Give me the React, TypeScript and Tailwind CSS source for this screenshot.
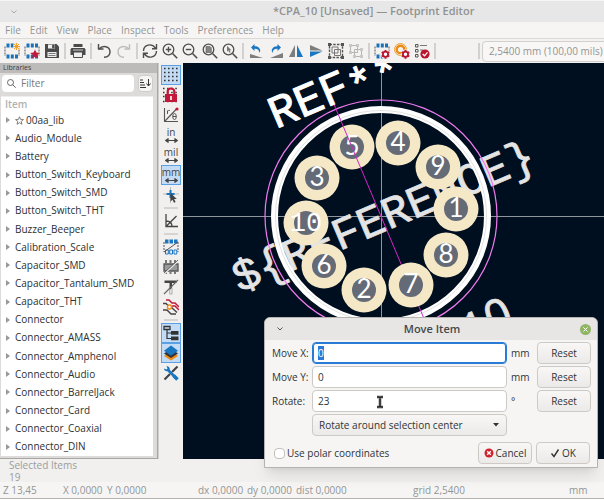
import { useEffect, useRef } from "react";
import type { ReactNode } from "react";
import clsx from "clsx";

const menus = ["File", "Edit", "View", "Place", "Inspect", "Tools", "Preferences", "Help"];

const libraries = [
  "00aa_lib",
  "Audio_Module",
  "Battery",
  "Button_Switch_Keyboard",
  "Button_Switch_SMD",
  "Button_Switch_THT",
  "Buzzer_Beeper",
  "Calibration_Scale",
  "Capacitor_SMD",
  "Capacitor_Tantalum_SMD",
  "Capacitor_THT",
  "Connector",
  "Connector_AMASS",
  "Connector_Amphenol",
  "Connector_Audio",
  "Connector_BarrelJack",
  "Connector_Card",
  "Connector_Coaxial",
  "Connector_DIN",
];

const pads = [
  { n: "3", x: 317, y: 178 },
  { n: "4", x: 398, y: 143 },
  { n: "9", x: 438, y: 167 },
  { n: "1", x: 456, y: 209 },
  { n: "10", x: 306, y: 223 },
  { n: "6", x: 324, y: 266 },
  { n: "2", x: 364, y: 290 },
  { n: "8", x: 446, y: 255 },
  { n: "7", x: 411, y: 285 },
];

function Icon({ children }: { children: ReactNode }) {
  return (
    <svg viewBox="0 0 16 16" className="h-4 w-4" fill="none" aria-hidden="true">
      {children}
    </svg>
  );
}

function Gear({ x, y }: { x: number; y: number }) {
  return (
    <g transform={`translate(${x} ${y})`}>
      <circle r="2.6" stroke="#b9152f" strokeWidth="1.8" fill="#fff" />
      <path
        d="M0-4.4V-3M0 3v1.4M-3.8-2.2l1.2.7M2.6 1.5l1.2.7M-3.8 2.2l1.2-.7M2.6-1.5l1.2-.7"
        stroke="#b9152f"
        strokeWidth="1.9"
      />
    </g>
  );
}

function FootprintBody() {
  return (
    <>
      <path d="M1 3.5V13M15 3.5V13" stroke="#555" strokeWidth="1" strokeDasharray="2 1" />
      <path d="M2.5.5h3v4h-3zM6.8.5h3v4h-3zM11 .5h3v4h-3zM2.5 11.5h3v4h-3zM6.8 11.5h3v4h-3zM11 11.5h3v4h-3z" fill="#1a72b8" />
    </>
  );
}

function Magnifier({ children }: { children?: ReactNode }) {
  return (
    <Icon>
      <circle cx="6.5" cy="6.5" r="5.3" stroke="#4d4d4d" strokeWidth="1.3" />
      <path d="M10.5 10.5l4.7 4.7" stroke="#4d4d4d" strokeWidth="1.6" />
      {children}
    </Icon>
  );
}

const topGroups: { label: string; icon: ReactNode }[][] = [
  [
    {
      label: "New footprint",
      icon: (
        <Icon>
          <FootprintBody />
          <circle cx="12.5" cy="3.5" r="3.4" fill="#f0efee" />
          <path d="M12.5 0v7M9 3.5h7M10 1l5 5M15 1l-5 5" stroke="#f5a02c" strokeWidth="1" />
        </Icon>
      ),
    },
    {
      label: "New footprint using wizard",
      icon: (
        <Icon>
          <FootprintBody />
          <path d="M11 6.5l1.4 3.1 3.4.3-2.6 2.2.8 3.4-3-1.8-3 1.8.8-3.4-2.6-2.2 3.4-.3z" fill="#c2183a" />
        </Icon>
      ),
    },
    {
      label: "Save",
      icon: (
        <Icon>
          <path d="M1 1h11.5L15 3.5V15H1z" fill="#4a4a4a" />
          <path d="M4 1.5h7v4H4zM3.5 9h9v5h-9z" fill="#eee" />
          <path d="M8.5 2h1.7v3H8.5zM4.5 10.5h7M4.5 12.5h7" fill="#4a4a4a" stroke="#4a4a4a" strokeWidth=".7" />
        </Icon>
      ),
    },
  ],
  [
    {
      label: "Print",
      icon: (
        <Icon>
          <path d="M3.5 1h9v3h-9z" fill="#4a4a4a" />
          <path d="M1.5 5h13L15.5 6.5V12h-15V6.5z" fill="#4a4a4a" />
          <path d="M3.5 9h9v5.5h-9z" fill="#eee" stroke="#4a4a4a" />
          <path d="M3 7h10" stroke="#ccc" />
        </Icon>
      ),
    },
  ],
  [
    {
      label: "Undo",
      icon: (
        <Icon>
          <path d="M2.5 1v5h5M3 6C6.5 2 14 3 14 9c0 3-2.5 5-6 5.3" stroke="#4d4d4d" strokeWidth="1.4" />
        </Icon>
      ),
    },
    {
      label: "Redo",
      icon: (
        <Icon>
          <path d="M13.5 1v5h-5M13 6C9.5 2 2 3 2 9c0 3 2.5 5 6 5.3" stroke="#bdbdbd" strokeWidth="1.4" />
        </Icon>
      ),
    },
  ],
  [
    {
      label: "Refresh",
      icon: (
        <Icon>
          <path d="M1.5 8C1.7 1.5 9.5-.2 13.5 5M14.5 1v4.7H10M14.5 8c-.2 6.5-8 8.2-12 3M1.5 15v-4.7H6" stroke="#4d4d4d" strokeWidth="1.4" />
        </Icon>
      ),
    },
    {
      label: "Zoom in",
      icon: (
        <Magnifier>
          <path d="M6.5 3.8v5.4M3.8 6.5h5.4" stroke="#4d4d4d" strokeWidth="1.4" />
        </Magnifier>
      ),
    },
    {
      label: "Zoom out",
      icon: (
        <Magnifier>
          <path d="M3.8 6.5h5.4" stroke="#4d4d4d" strokeWidth="1.4" />
        </Magnifier>
      ),
    },
    {
      label: "Zoom to fit",
      icon: (
        <Magnifier>
          <path d="M4 3.5h4l1.3 1.3v4.7H4z" fill="#858585" stroke="#555" strokeWidth=".6" />
        </Magnifier>
      ),
    },
    {
      label: "Zoom to selection",
      icon: (
        <Magnifier>
          <path d="M5 2.8v6l1.4-1.2 1 2.2 1.2-.6-1-2h1.8z" fill="#777" />
        </Magnifier>
      ),
    },
  ],
  [
    {
      label: "Rotate counterclockwise",
      icon: (
        <Icon>
          <path d="M2 11l13 4H2z" fill="#7d7d7d" />
          <path d="M6.5 1L3 4.5 6.5 8V5.7c3-.2 4.8 1.3 5 4.3 2-3.5-.5-7-5-6.8z" fill="#1a76c0" />
        </Icon>
      ),
    },
    {
      label: "Rotate clockwise",
      icon: (
        <Icon>
          <path d="M15 10v5H2z" fill="#7d7d7d" />
          <path d="M9.5 1L13 4.5 9.5 8V5.7c-3-.2-4.8 1.3-5 4.3-2-3.5.5-7 5-6.8z" fill="#1a76c0" />
        </Icon>
      ),
    },
    {
      label: "Mirror horizontally",
      icon: (
        <Icon>
          <path d="M7 2v12H1z" fill="#7d7d7d" />
          <path d="M9 2v12h6z" fill="#1a76c0" />
        </Icon>
      ),
    },
    {
      label: "Mirror vertically",
      icon: (
        <Icon>
          <path d="M2 2l12.5 5.5H2z" fill="#7d7d7d" />
          <path d="M2 14l12.5-5.5H2z" fill="#1a76c0" />
        </Icon>
      ),
    },
    {
      label: "Group",
      icon: (
        <Icon>
          <path d="M1.5 1.5h13v13h-13z" stroke="#555" strokeWidth="1.4" strokeDasharray="2.5 1.2" />
          <path d="M4 4h6v6H4zM6.5 6.5h6v6h-6z" stroke="#777" />
          <path d="M0 0h3v3H0zM13 0h3v3h-3zM0 13h3v3H0zM13 13h3v3h-3z" fill="#555" />
        </Icon>
      ),
    },
    {
      label: "Ungroup",
      icon: (
        <Icon>
          <path d="M2.5 2.5h7v7h-7zM6.5 6.5h7v7h-7z" stroke="#b5b5b5" />
          <path d="M1 1h3v3H1zM8 1h3v3H8zM1 8h3v3H1zM12 5h3v3h-3zM12 12h3v3h-3zM5 12h3v3H5z" fill="#c8c8c8" />
        </Icon>
      ),
    },
  ],
  [
    {
      label: "Footprint properties",
      icon: (
        <Icon>
          <FootprintBody />
          <circle cx="11.5" cy="11.3" r="5" fill="#f0efee" />
          <Gear x={11.5} y={11.3} />
        </Icon>
      ),
    },
    {
      label: "Pad properties",
      icon: (
        <Icon>
          <circle cx="6.5" cy="6.5" r="6" stroke="#f0a030" />
          <circle cx="6.5" cy="6.5" r="3.8" stroke="#ee8a12" strokeWidth="2.4" />
          <circle cx="11.5" cy="11.3" r="4.8" fill="#f0efee" />
          <Gear x={11.5} y={11.3} />
        </Icon>
      ),
    },
    {
      label: "Check footprint",
      icon: (
        <Icon>
          <path d="M1.5 1.5h2.5V4H1.5zM1.5 6.5h2.5V9H1.5zM1.5 11.5h2.5V14H1.5z" stroke="#555" />
          <path d="M6 2.5h7M6 7h3" stroke="#777" />
          <circle cx="11" cy="11" r="4.6" fill="#b9152f" />
          <path d="M8.7 11l1.8 1.8 3-3.5" stroke="#fff" strokeWidth="1.3" />
        </Icon>
      ),
    },
  ],
];

function UnitIcon({ unit }: { unit: string }) {
  return (
    <span className="flex flex-col items-center text-[10px] leading-[11px] text-[#444]">
      {unit}
      <svg viewBox="0 0 13 5" className="h-[5px] w-[13px]" aria-hidden="true">
        <path d="M2 2.5h9M3.5.5L.8 2.5l2.7 2M9.5.5l2.7 2-2.7 2" fill="#444" stroke="#444" strokeWidth="1.2" />
      </svg>
    </span>
  );
}

const sideGroups: { label: string; on?: boolean; icon: ReactNode }[][] = [
  [
    {
      label: "Show grid",
      on: true,
      icon: (
        <Icon>
          <path
            d="M1 1.5h15M1 5.5h15M1 9.5h15M1 13.5h15"
            stroke="#333"
            strokeWidth="1.6"
            strokeDasharray="1.6 2.4"
          />
        </Icon>
      ),
    },
    {
      label: "Grid overrides",
      icon: (
        <Icon>
          <path d="M0 1.5h16M0 5.5h16M0 9.5h16M0 14.5h16" stroke="#333" strokeWidth="1.5" strokeDasharray="1.5 2.6" />
          <path d="M4.7 8V4.5c0-4 6.6-4 6.6 0V8" stroke="#c2183a" strokeWidth="2.2" />
          <path d="M2 7h12v8H2z" fill="#c2183a" />
          <path d="M8 9v4" stroke="#fff" strokeWidth="1.6" />
        </Icon>
      ),
    },
    {
      label: "Polar coordinates",
      icon: (
        <Icon>
          <path d="M1.5 1v13.5H15M2 14L13.5 2" stroke="#555" strokeWidth="1.1" />
          <path d="M4.5 7V3.5M4.5 4.5C5 3.5 6 3.3 7 3.5" stroke="#555" />
          <ellipse cx="11.5" cy="9.5" rx="1.8" ry="3" stroke="#555" />
          <path d="M9.7 9.5h3.6" stroke="#555" />
          <circle cx="14" cy="2" r="1.6" fill="#c2183a" />
        </Icon>
      ),
    },
    { label: "Inches", icon: <UnitIcon unit="in" /> },
    { label: "Mils", icon: <UnitIcon unit="mil" /> },
    { label: "Millimeters", on: true, icon: <UnitIcon unit="mm" /> },
    {
      label: "Full-window crosshairs",
      icon: (
        <Icon>
          <path d="M7.5 0v16M0 7h16" stroke="#bbb" />
          <path d="M7.5 3v8M3.5 7h8" stroke="#1a76c0" strokeWidth="2" />
          <path d="M7.5 6v8.5l2-1.8 1.5 3 1.6-.8-1.5-3h2.7z" fill="#444" />
        </Icon>
      ),
    },
  ],
  [
    {
      label: "Constrain angles",
      icon: (
        <Icon>
          <path d="M3 1v12.5h12M3 13.5L13.5 3M3 8c4 0 6 2.5 6 5.5" stroke="#444" strokeWidth="1.3" />
        </Icon>
      ),
    },
  ],
  [
    {
      label: "Sketch pads",
      icon: (
        <Icon>
          <path d="M1 3v10M15 3v10" stroke="#555" strokeDasharray="2 1" />
          <path d="M2 .5h3.5v4H2zM6.5.5H10v4H6.5zM11 .5h3.5v4H11z" fill="#1a76c0" />
          <path d="M2.5 11h2.8v4H2.5zM6.7 11h2.8v4H6.7zM11 11h2.8v4H11z" stroke="#1a76c0" />
          <path d="M1 13L15 3" stroke="#555" />
        </Icon>
      ),
    },
    {
      label: "Sketch graphics",
      icon: (
        <Icon>
          <path d="M1 5h14v7H1z" fill="#999" stroke="#555" strokeWidth="1.3" />
          <path d="M3 1v4M7.5 1v4M12 1v4M3 12v3M7.5 12v3M12 12v3" stroke="#777" strokeWidth="2" />
          <path d="M1 15L15 2" stroke="#eee" strokeWidth="1.6" />
          <path d="M1 14L15 1" stroke="#444" strokeWidth=".8" />
        </Icon>
      ),
    },
    {
      label: "Sketch text",
      icon: (
        <Icon>
          <path d="M1.5 1.5h12v2.5h-4.5v5l-2.5 2V4h-5z" fill="#444" />
          <path d="M6.7 10.5V15H9V8.5" stroke="#aaa" />
          <path d="M1 15L15 1" stroke="#666" strokeWidth="1.1" />
        </Icon>
      ),
    },
    {
      label: "Sketch tracks",
      icon: (
        <Icon>
          <path d="M0 4.5h3l3 3M0 11h4l4 4h5M8 8l6 5.5" stroke="#444" strokeWidth="1.4" />
          <path d="M3 1h3l3 3h3l4 4M9 7h3l4 4" stroke="#c2183a" strokeWidth="1.5" />
          <circle cx="6.5" cy="8" r="2" fill="#fff" stroke="#ee8a12" strokeWidth="1.5" />
        </Icon>
      ),
    },
  ],
  [
    {
      label: "Footprint tree",
      on: true,
      icon: (
        <Icon>
          <path d="M1 1.5h6v3H1z" stroke="#333" strokeWidth="1.3" />
          <path d="M4 4.5v9h4M4 8h4" stroke="#333" strokeWidth="1.2" />
          <path d="M8 6h7.5v3.7H8zM8 11.5h7.5v3.7H8z" fill="#333" />
        </Icon>
      ),
    },
    {
      label: "Layers manager",
      on: true,
      icon: (
        <Icon>
          <path d="M8 6l7 5-7 4.5L1 11z" fill="#ee8a12" />
          <path d="M8 3.5l7 5L8 13 1 8.5z" fill="#333" />
          <path d="M8 .5l7 5.3-7 5-7-5z" fill="#1a76c0" />
        </Icon>
      ),
    },
    {
      label: "Tools",
      icon: (
        <Icon>
          <path d="M14.5 1.5L9 7M7 9l-5.5 5.5" stroke="#444" strokeWidth="2.2" />
          <path d="M4.5 4.5L14 14" stroke="#1a76c0" strokeWidth="2.6" />
          <path d="M1 3.5C1 6 4 7 6 5.5S6 1 3.5 1l1 2.5L3.5 4.5z" fill="#1a76c0" />
          <path d="M10.5 10.5l4 4" stroke="#1a76c0" strokeWidth="3.5" />
        </Icon>
      ),
    },
  ],
];

function TopToolbar() {
  return (
    <div className="flex h-[25px] items-center overflow-hidden border-t border-[#dcdad8] bg-[#f3f2f1] pl-[2px]">
      {topGroups.map((group, i) => (
        <div key={i} className="flex shrink-0 items-center">
          {group.map((item) => (
            <button key={item.label} aria-label={item.label} className="flex h-5 w-5 items-center justify-center">
              {item.icon}
            </button>
          ))}
          <span className="mx-[2px] h-4 w-[2px] bg-[#d3d1cf]" />
        </div>
      ))}
      <span className="ml-[40px] h-4 w-[2px] shrink-0 bg-[#d3d1cf]" />
      <select
        aria-label="Grid"
        className="ml-[2px] h-[21px] w-[160px] shrink-0 appearance-none rounded border border-[#d2cfcc] bg-[#f8f7f6] px-[6px] text-[10px] text-[#929595]"
      >
        <option>2,5400 mm (100,00 mils)</option>
      </select>
    </div>
  );
}

function SideToolbar() {
  return (
    <div className="flex w-[25px] shrink-0 flex-col items-end border-l border-[#d0cecc] bg-[#f1f0ef] pt-[2px] pr-[2px]">
      {sideGroups.map((group, i) => (
        <div key={i} className="flex w-5 flex-col items-center">
          {i > 0 && <span className="my-[2px] h-[2px] w-[14px] bg-[#d6d4d2]" />}
          {group.map((item) => (
            <button
              key={item.label}
              aria-label={item.label}
              className={clsx(
                "flex h-5 w-5 items-center justify-center",
                item.on && "border border-[#5b9fe4] bg-[#c3dbf4]"
              )}
            >
              {item.icon}
            </button>
          ))}
        </div>
      ))}
    </div>
  );
}

function LibraryPanel() {
  return (
    <aside className="flex w-[158px] shrink-0 flex-col border-r border-b border-[#a9a7a5] bg-[#dddbd9]">
      <h2 className="h-[10px] bg-[#bdbbb9] pl-[3px] text-[7px] leading-[10px] text-[#3c3c3c]">Libraries</h2>
      <div className="flex gap-1 px-[2px] pt-[2px] pr-[4px]">
        <label className="flex h-[17px] min-w-0 flex-1 items-center gap-[5px] rounded-sm bg-white pl-[5px]">
          <svg viewBox="0 0 9 9" className="h-[9px] w-[9px] shrink-0" fill="none" stroke="#666" aria-hidden="true">
            <circle cx="3.5" cy="3.5" r="3" />
            <path d="M5.7 5.7l3 3" />
          </svg>
          <input placeholder="Filter" aria-label="Filter" className="w-full min-w-0 text-[10px] outline-none placeholder:text-[#777]" />
        </label>
        <button aria-label="Sort" className="flex h-[17px] w-[15px] items-center justify-center rounded-sm border border-[#cfccc9] bg-[#f6f5f4]">
          <svg viewBox="0 0 11 11" className="h-[11px] w-[11px]" fill="none" stroke="#333" aria-hidden="true">
            <path d="M0 2h3M0 4.5h4M0 7h5M0 9.5h6" strokeWidth="1.2" />
            <path d="M8.5 1v6.5M6.5 5.5l2 2.5 2-2.5" />
          </svg>
        </button>
      </div>
      <div className="mx-[1px] mt-[4px] mr-[4px] mb-[2px] flex flex-1 flex-col border-t border-[#eee] bg-white">
        <div className="h-[14px] pl-[4px] text-[10px] leading-[14px] font-semibold text-[#b0b2b2]">Item</div>
        <ul className="flex flex-1 flex-col text-[10px] text-[#2b3033]">
          {libraries.map((name, i) => (
            <li key={name} className="flex flex-1 items-center pl-[5px]">
              <svg viewBox="0 0 4 6" className="mr-[5px] h-[6px] w-[4px]" aria-hidden="true">
                <path d="M0 0l4 3-4 3z" fill="#999" />
              </svg>
              {i === 0 && (
                <svg viewBox="0 0 10 10" className="mr-[2px] h-[9px] w-[9px]" fill="none" stroke="#666" aria-hidden="true">
                  <path d="M5 .8l1.2 3 3.2.2-2.5 2 .9 3.2L5 7.4 2.2 9.2l.9-3.2-2.5-2 3.2-.2z" strokeWidth=".9" />
                </svg>
              )}
              {name}
            </li>
          ))}
        </ul>
      </div>
    </aside>
  );
}

function Pad({ n, x, y }: { n: string; x: number; y: number }) {
  const wide = n.length > 1;

  return (
    <g>
      <circle cx={x} cy={y} r="22.5" fill="#f5e8c6" />
      <circle cx={x} cy={y} r="12" fill="#646b77" />
      <text
        x={x}
        y={y + 8}
        textAnchor="middle"
        fontSize={wide ? 27 : 26}
        fontFamily={wide ? "Liberation Mono, monospace" : "Lato, sans-serif"}
        fill="#fff"
      >
        {n}
      </text>
    </g>
  );
}

function Board() {
  return (
    <main className="min-w-0 flex-1 overflow-hidden bg-[#000f20]">
      <svg viewBox="183 63 421 396" className="h-[396px] w-[421px]" fontFamily="Liberation Mono, monospace">
        <path d="M381.5 63v396M183 216.5h421" stroke="#8f959d" />
        <g fontSize="45" fill="#e4e4e4" stroke="#e4e4e4" strokeWidth=".8" strokeLinejoin="round">
          <text transform="translate(383 216) rotate(-23)" y="15" textAnchor="middle">
            {"${REFERENCE}"}
          </text>
          <text transform="translate(516 325) rotate(-23)" textAnchor="end">
            CPA_1<tspan fontFamily="Noto Sans, sans-serif">0</tspan>
          </text>
        </g>
        <circle cx="381" cy="216" r="106.5" fill="none" stroke="#fff" strokeWidth="7" />
        <circle cx="381" cy="216" r="105.5" fill="none" stroke="#e2e2e2" />
        <circle cx="381" cy="216" r="116" fill="none" stroke="#f07af0" strokeWidth="1.2" />
        <Pad n="5" x={352} y={147} />
        <path d="M333 102l92 219" stroke="#d326c8" />
        {pads.map((pad) => (
          <Pad key={pad.n} {...pad} />
        ))}
        <text transform="translate(276 129) rotate(-23)" fontSize="46" fill="#fff" stroke="#fff" strokeWidth="1" strokeLinejoin="round">
          REF<tspan dy="7">**</tspan>
        </text>
      </svg>
    </main>
  );
}

const buttonStyle =
  "flex h-[22px] w-[54px] items-center justify-center gap-[2px] rounded border border-[#cdc9c5] bg-linear-to-b from-[#f8f7f6] to-[#eceae8]";

function Field({ id, label, value, unit, active }: { id: string; label: string; value: string; unit: string; active?: boolean }) {
  const ref = useRef<HTMLInputElement>(null);

  useEffect(() => {
    if (active) ref.current?.select();
  }, [active]);

  return (
    <div className="flex h-[22px] items-center">
      <label htmlFor={id} className="w-10 shrink-0 whitespace-nowrap">
        {label}
      </label>
      <input
        id={id}
        ref={ref}
        defaultValue={value}
        className="h-[22px] min-w-0 flex-1 rounded border border-[#cdc9c5] bg-white px-[5px] outline-none selection:bg-[#2a7bd6] selection:text-white focus:border-[#2a7bd6] focus:ring-1 focus:ring-[#2a7bd6] focus:ring-inset"
      />
      <span className="w-[30px] shrink-0 pl-[4px]">{unit}</span>
      <button className={buttonStyle}>Reset</button>
    </div>
  );
}

function MoveDialog() {
  return (
    <section
      role="dialog"
      aria-label="Move Item"
      className="absolute top-[317px] right-[6px] w-[334px] overflow-hidden rounded-t-md border border-[#b5b3b1] bg-[#f6f5f4] text-[10px] text-[#2e3436] shadow-lg"
    >
      <header className="flex h-[22px] items-center justify-between bg-[#e7e6e5] px-[6px]">
        <svg viewBox="0 0 8 8" className="ml-[5px] h-2 w-2" fill="none" stroke="#555" aria-hidden="true">
          <path d="M1.5 2.5L4 5l2.5-2.5" />
        </svg>
        <h1 className="text-[11px] font-semibold text-[#44494b]">Move Item</h1>
        <button aria-label="Close" className="flex h-[11px] w-[11px] items-center justify-center rounded-full bg-[#8fb565]">
          <svg viewBox="0 0 6 6" className="h-[5px] w-[5px]" stroke="#fff" strokeWidth="1.2" aria-hidden="true">
            <path d="M.5.5l5 5M5.5.5l-5 5" />
          </svg>
        </button>
      </header>
      <div className="flex flex-col gap-[2px] pt-[2px] pr-[6px] pl-[7px]">
        <Field id="move-x" label="Move X:" value="0" unit="mm" active />
        <Field id="move-y" label="Move Y:" value="0" unit="mm" />
        <Field id="rotate" label="Rotate:" value="23" unit="°" />
        <div className="relative mr-[84px] ml-10">
          <select
            aria-label="Rotation anchor"
            className="block h-[22px] w-full appearance-none rounded border border-[#cdc9c5] bg-linear-to-b from-[#f8f7f6] to-[#eceae8] px-[6px]"
          >
            <option>Rotate around selection center</option>
          </select>
          <svg viewBox="0 0 6 4" className="pointer-events-none absolute top-[9px] right-[8px] h-1 w-[6px]" aria-hidden="true">
            <path d="M0 0h6L3 3.5z" fill="#333" />
          </svg>
        </div>
      </div>
      <footer className="flex items-center gap-[4px] pt-[6px] pr-[7px] pb-[3px] pl-[9px]">
        <label className="mr-auto flex items-center gap-[2px]">
          <input type="checkbox" className="h-[11px] w-[11px] appearance-none rounded-sm border border-[#c4c0bc] bg-white" />
          Use polar coordinates
        </label>
        <button className={buttonStyle}>
          <svg viewBox="0 0 10 10" className="h-[10px] w-[10px]" aria-hidden="true">
            <circle cx="5" cy="5" r="4.5" fill="#d0202c" />
            <path d="M3.2 3.2l3.6 3.6M6.8 3.2L3.2 6.8" stroke="#fff" strokeWidth="1.4" />
          </svg>
          Cancel
        </button>
        <button className={buttonStyle}>
          <svg viewBox="0 0 10 10" className="h-[10px] w-[10px]" fill="none" stroke="#333" aria-hidden="true">
            <path d="M1.5 5.5L4 8.5 8.5 1.5" strokeWidth="1.4" />
          </svg>
          OK
        </button>
      </footer>
      <svg viewBox="0 0 8 14" className="pointer-events-none absolute top-[77px] left-[111px] h-[14px] w-2" aria-hidden="true">
        <path d="M1 2h2l1 1 1-1h2M4 2v10M1 12h2l1-1 1 1h2" fill="none" stroke="#999" strokeWidth="3" />
        <path d="M1 2h2l1 1 1-1h2M4 2v10M1 12h2l1-1 1 1h2" fill="none" stroke="#222" strokeWidth="1.5" />
      </svg>
    </section>
  );
}

export default function App() {
  return (
    <div className="relative flex flex-col overflow-hidden bg-[#f1f0ef] font-['Open_Sans',sans-serif]">
      <header className="flex h-[22px] items-center border-t border-[#f6f6f6] bg-[#e7e7e7] pl-[10px] text-[11px] font-semibold text-[#909292]">
        <svg viewBox="0 0 8 8" className="h-2 w-2" fill="none" stroke="#aaa" aria-hidden="true">
          <path d="M1.5 2.5L4 5l2.5-2.5" />
        </svg>
        <h1 className="ml-[255px] whitespace-nowrap">*CPA_10 [Unsaved] — Footprint Editor</h1>
      </header>
      <nav className="flex h-4 items-center gap-[9px] bg-[#f6f5f4] pl-[5px] text-[10px] text-[#929595]">
        {menus.map((menu) => (
          <button key={menu}>{menu}</button>
        ))}
      </nav>
      <TopToolbar />
      <div className="flex h-[396px]">
        <LibraryPanel />
        <SideToolbar />
        <Board />
      </div>
      <div className="h-[23px] pl-[9px] text-[10px] leading-[12px] text-[#9a9c9c]">
        <p>Selected Items</p>
        <p>19</p>
      </div>
      <footer className="flex h-[17px] items-center border-b border-[#b5b3b1] bg-[#f6f5f4] pl-[3px] text-[10px] whitespace-nowrap text-[#929595]">
        <span className="w-[60px]">Z 13,45</span>
        <span className="w-[44px]">X 0,0000</span>
        <span className="w-[91px]">Y 0,0000</span>
        <span className="w-[49px]">dx 0,0000</span>
        <span className="w-[49px]">dy 0,0000</span>
        <span className="w-[117px]">dist 0,0000</span>
        <span className="w-[156px]">grid 2,5400</span>
        <span>mm</span>
      </footer>
      <MoveDialog />
    </div>
  );
}
